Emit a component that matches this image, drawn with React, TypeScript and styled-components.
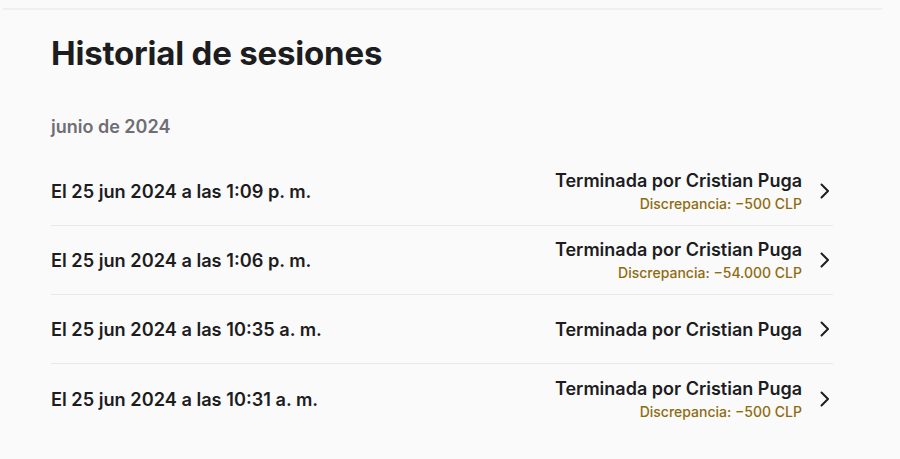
import React from "react";
import styled, { createGlobalStyle } from "styled-components";

const GlobalStyle = createGlobalStyle`
  html, body {
    margin: 0;
    padding: 0;
    background: #fafafa;
  }
  body {
    font-family: Inter, "Noto Sans", "Liberation Sans", sans-serif;
    color: #1d1d1f;
    -webkit-font-smoothing: antialiased;
  }
`;

const Page = styled.div`
  width: 900px;
  height: 459px;
  overflow: hidden;
  background: #fafafa;
`;

const TopRule = styled.div`
  height: 2px;
  margin: 8px 18px 0 3px;
  background: #efefef;
`;

const Content = styled.main`
  display: flex;
  flex-direction: column;
  padding: 0 67px 0 51px;
`;

const Title = styled.h1`
  margin: 23px 0 0;
  font-size: 33px;
  line-height: 40px;
  font-weight: 700;
  letter-spacing: -0.2px;
  color: #1d1d1f;
`;

const MonthLabel = styled.h2`
  margin: 43px 0 0;
  font-size: 18px;
  line-height: 22px;
  font-weight: 600;
  color: #6e6e73;
`;

const List = styled.ul`
  list-style: none;
  margin: 19px 0 0;
  padding: 0;
  display: flex;
  flex-direction: column;
`;

const Row = styled.li<{ $last?: boolean }>`
  height: 69px;
  box-sizing: border-box;
  display: flex;
  align-items: center;
  justify-content: space-between;
  border-bottom: ${(p) => (p.$last ? "none" : "1px solid #e8e8e8")};
  cursor: pointer;
`;

const DateText = styled.span`
  font-size: 18.2px;
  font-weight: 600;
  color: #1d1d1f;
`;

const RightSide = styled.div`
  display: flex;
  align-items: center;
  gap: 16px;
`;

const Meta = styled.div`
  display: flex;
  flex-direction: column;
  align-items: flex-end;
`;

const EndedBy = styled.span`
  font-size: 18px;
  line-height: 25px;
  font-weight: 600;
  color: #1d1d1f;
`;

const Discrepancy = styled.span`
  font-size: 14px;
  line-height: 21px;
  font-weight: 500;
  color: #8f6b0f;
`;

const Chevron = styled.svg`
  width: 14px;
  height: 16px;
  margin-right: 1px;
  flex-shrink: 0;
`;

type Session = { date: string; discrepancy?: string };

const sessions: Session[] = [
  { date: "El 25 jun 2024 a las 1:09 p. m.", discrepancy: "Discrepancia: −500 CLP" },
  { date: "El 25 jun 2024 a las 1:06 p. m.", discrepancy: "Discrepancia: −54.000 CLP" },
  { date: "El 25 jun 2024 a las 10:35 a. m." },
  { date: "El 25 jun 2024 a las 10:31 a. m.", discrepancy: "Discrepancia: −500 CLP" },
];

export default function App() {
  return (
    <Page>
      <GlobalStyle />
      <TopRule />
      <Content>
        <Title>Historial de sesiones</Title>
        <MonthLabel>junio de 2024</MonthLabel>
        <List>
          {sessions.map((s, i) => (
            <Row key={i} $last={i === sessions.length - 1}>
              <DateText>{s.date}</DateText>
              <RightSide>
                <Meta>
                  <EndedBy>Terminada por Cristian Puga</EndedBy>
                  {s.discrepancy && <Discrepancy>{s.discrepancy}</Discrepancy>}
                </Meta>
                <Chevron viewBox="0 0 14 16" fill="none">
                  <path
                    d="M3.5 1.5 L10 8 L3.5 14.5"
                    stroke="#1d1d1f"
                    strokeWidth="2"
                    strokeLinecap="round"
                    strokeLinejoin="round"
                  />
                </Chevron>
              </RightSide>
            </Row>
          ))}
        </List>
      </Content>
    </Page>
  );
}
